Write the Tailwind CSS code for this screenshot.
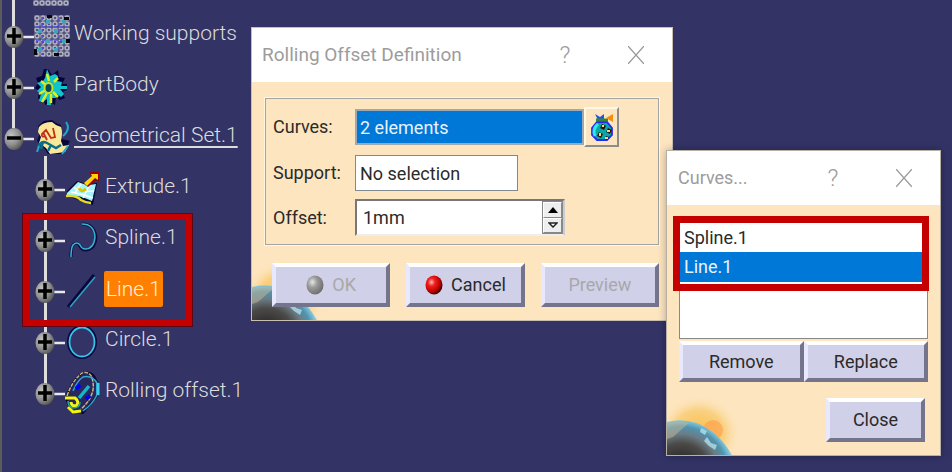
<!DOCTYPE html>
<html lang="en">
<head>
    <meta charset="UTF-8">
    <meta name="viewport" content="width=device-width, initial-scale=1.0">
    <title>Rolling Offset Definition</title>
    <script src="https://cdn.jsdelivr.net/npm/@tailwindcss/browser@4"></script>
</head>
<body class="relative min-h-screen overflow-hidden bg-[#333366] border-l-2 border-[#5c5c5c] font-['Roboto','Open_Sans',sans-serif] text-lg text-[#2a2a2a]">

    <!-- shared gradients and symbols -->
    <svg class="absolute w-0 h-0" aria-hidden="true">
        <defs>
            <radialGradient id="knob" cx="0.35" cy="0.35" r="0.7">
                <stop offset="0" stop-color="#c4c4c4"/>
                <stop offset="0.6" stop-color="#8e8e8e"/>
                <stop offset="1" stop-color="#555"/>
            </radialGradient>
            <radialGradient id="ballGray" cx="0.35" cy="0.35" r="0.7">
                <stop offset="0" stop-color="#e6e6e6"/>
                <stop offset="0.4" stop-color="#9c9c9c"/>
                <stop offset="1" stop-color="#6c6c6c"/>
            </radialGradient>
            <radialGradient id="ballRed" cx="0.35" cy="0.35" r="0.7">
                <stop offset="0" stop-color="#ffc0b0"/>
                <stop offset="0.3" stop-color="#f02020"/>
                <stop offset="0.7" stop-color="#c00000"/>
                <stop offset="1" stop-color="#300"/>
            </radialGradient>
            <radialGradient id="glow">
                <stop offset="0" stop-color="#f8bc48"/>
                <stop offset="0.6" stop-color="#f9cb70" stop-opacity="0.8"/>
                <stop offset="1" stop-color="#fde5bf" stop-opacity="0"/>
            </radialGradient>
            <radialGradient id="earth" gradientUnits="userSpaceOnUse" cx="14" cy="78" r="54">
                <stop offset="0.3" stop-color="#303030"/>
                <stop offset="0.55" stop-color="#4c4a48"/>
                <stop offset="0.72" stop-color="#6a7c84"/>
                <stop offset="0.86" stop-color="#4f94b0"/>
                <stop offset="1" stop-color="#94d4e4"/>
            </radialGradient>
            <pattern id="mesh" width="6" height="6" patternUnits="userSpaceOnUse">
                <rect width="6" height="6" fill="#55557c"/>
                <circle cx="3" cy="3" r="2" fill="none" stroke="#b4b4c4" stroke-width="1.4"/>
            </pattern>
        </defs>
        <symbol id="plus" viewBox="0 0 32 24">
            <path d="M20 13H32" stroke="#e8e8e8" stroke-width="2.5"/>
            <ellipse cx="12" cy="13" rx="9.5" ry="11" fill="url(#knob)"/>
            <path d="M5 12H19M12 4V20" stroke="#000" stroke-width="3.5"/>
        </symbol>
        <symbol id="minus" viewBox="0 0 32 24">
            <path d="M20 13H32" stroke="#e8e8e8" stroke-width="2.5"/>
            <ellipse cx="12" cy="13" rx="9.5" ry="11" fill="url(#knob)"/>
            <path d="M5 12H19" stroke="#000" stroke-width="3.5"/>
        </symbol>
        <symbol id="planet" viewBox="0 0 90 60">
            <ellipse cx="32" cy="38" rx="42" ry="38" fill="url(#glow)"/>
            <circle cx="46" cy="35" r="10" fill="#ff9c48" opacity="0.6"/>
            <path d="M0 27Q14 23 30 28Q52 37 65 60H0Z" fill="url(#earth)"/>
            <path d="M0 28Q14 25 22 28L6 42 0 44Z" fill="#c8b898" opacity="0.5"/>
            <path d="M40 42l4 6 6 2-2 5-6-4-5-5zM34 33l6 3-2 4-5-3z" fill="#c0e8f4" opacity="0.7"/>
        </symbol>
    </svg>

    <!-- specification tree -->
    <nav aria-label="Specification tree" class="w-fit text-[21px] font-light text-[#dcdcdc]">
        <ul>
            <li class="relative h-[10px] pl-[31px]">
                <div class="absolute left-[10px] top-0 w-[3px] h-[128px] bg-[#dedede]"></div>
                <svg class="w-9 h-[6px]" viewBox="0 0 36 6"><rect width="36" height="6" fill="url(#mesh)"/></svg>
            </li>
            <li class="relative flex items-center h-[51px]">
                <button aria-label="Expand"><svg class="block w-8 h-6"><use href="#plus"/></svg></button>
                <svg class="w-9 h-[42px]" viewBox="0 0 36 42">
                    <rect width="36" height="42" fill="url(#mesh)"/>
                    <path d="M2 12h32M2 25h32M8 2v38M25 2v38" stroke="#4848e8" stroke-width="1.5" stroke-dasharray="3 3"/>
                    <path d="M12 5h4v4h-4zM28 5h4v4h-4zM4 14h4v4H4zM20 14h4v4h-4zM12 24h4v4h-4zM28 24h4v4h-4zM4 33h4v4H4zM20 33h4v4h-4z" fill="#3fa4b8"/>
                    <path d="M13 0h5v3h-5zM30 2h5v3h-5zM0 34h3v6H0zM20 38h5v3h-5zM32 24h4v4h-4z" fill="#05050a"/>
                </svg>
                <span class="pl-1 pb-1">Working supports</span>
            </li>
            <li class="relative flex items-center h-[51px]">
                <button aria-label="Expand"><svg class="block w-8 h-6"><use href="#plus"/></svg></button>
                <svg class="w-9 h-[40px]" viewBox="0 0 36 40">
                    <path d="M14 2l4 6 6-5 1 7 6 1-3 6h5v6l-5 2 3 6-5 2-4-3-1 8-5-3-5 3-1-7-6 1 1-8-4-3 3-5-2-5 6-2 2-7z" fill="#04043c"/>
                    <path d="M13 2l3 7 5-2 3 2-1 5 5 1-1 4h6v3h-7l4 5-3 3-4-3-1 4h-5v7h-4v-6l-4 3-4-1 2-7-4-3 4-4-4-4 6-2 2-3z" fill="#10c4cc"/>
                    <path d="M13 7l2 7M7 14l5 4M5 27l7-4M8 35l5-9M17 36v-9M24 30l-5-5M20 15l4-4" stroke="#dcf020" stroke-width="2.5"/>
                    <ellipse cx="14.500" cy="21" rx="5" ry="6" fill="#c8e020"/>
                    <ellipse cx="14.500" cy="21" rx="3" ry="4" fill="#0a4a58"/>
                </svg>
                <span class="pl-1 pb-1">PartBody</span>
            </li>
            <li class="relative flex items-center h-[51px]">
                <button aria-label="Collapse"><svg class="block w-8 h-6"><use href="#minus"/></svg></button>
                <svg class="w-9 h-[40px]" viewBox="0 0 36 40">
                    <path d="M4 8l6-5 8-1 4 3 5 2 1 14 8 2-7 13H14l-4-6-7-7 3-8z" fill="#08083c"/>
                    <path d="M5 9q4-5 13-5l4 3 5 2q2 5 0 14l2 5 6-1-4 7-15 2-4-6-7-5 2-6-3-5z" fill="#fbe79a"/>
                    <path d="M12 18q-5 2-4-2l4-4 5 8 4-1-2-9M9 14l4 8" fill="none" stroke="#c03018" stroke-width="1.800"/>
                    <path d="M4 29q3-7 9-4l9 5 5-3M9 24l-2 7M17 27l-3 6" fill="none" stroke="#087088" stroke-width="2.500"/>
                    <path d="M32 4q5 7-3 14M5 28l-2 6M34 28l-6 8" fill="none" stroke="#20a8d0" stroke-width="2"/>
                </svg>
                <a href="#" class="ml-1 mb-1 underline underline-offset-4 decoration-2">Geometrical Set.1</a>
            </li>
        </ul>
        <ul class="relative pl-[31px]">
            <li class="relative flex items-center h-[51px]">
                <div class="absolute left-[11px] -top-[7px] w-[3px] h-[236px] bg-[#dedede]"></div>
                <button aria-label="Expand" class="relative"><svg class="block w-8 h-6"><use href="#plus"/></svg></button>
                <svg class="w-9 h-[36px]" viewBox="0 0 36 36">
                    <path d="M2 20L12 10q10 4 20 2l-4 22q-12-4-26-9z" fill="#080838"/>
                    <path d="M2 22L13 11q8 4 18 2l-4 17Q15 24 2 24z" fill="#a4f4fc"/>
                    <path d="M9 17q10 4 20 3M6 21q12 2 22 6M16 13l-6 9M24 15l-6 12" fill="none" stroke="#fff" stroke-width="1.500"/>
                    <path d="M1 25q10-1 15 4 5 3 10 3" fill="none" stroke="#e8dc20" stroke-width="2.500"/>
                    <path d="M24 1h10v10l-3-2-8 7-4-3 8-7z" fill="#900"/>
                    <path d="M26 3h7v6l-3-2-8 8-3-3 8-7z" fill="#ffd400"/>
                    <path d="M14 17q2 5 7 1" fill="none" stroke="#d8c800" stroke-width="3"/>
                </svg>
                <span class="pl-[4px] pb-1">Extrude.1</span>
            </li>
            <li class="relative flex items-center h-[51px]">
                <button aria-label="Expand"><svg class="block w-8 h-6"><use href="#plus"/></svg></button>
                <svg class="w-9 h-[36px]" viewBox="0 0 36 36" fill="none">
                    <path d="M17 2q12 0 14 13-1 13-11 13-3 0-5-4-3-5-7-1-2 3-2 12" stroke="#08083c" stroke-width="3"/>
                    <path d="M17 2q12 0 13 13-1 12-10 12-3 0-5-4-3-4-7 0-2 3-2 12" stroke="#38b4d4" stroke-width="1.500"/>
                </svg>
                <span class="pl-[4px] pb-1">Spline.1</span>
            </li>
            <li class="relative flex items-center h-[51px]">
                <button aria-label="Expand"><svg class="block w-8 h-6"><use href="#plus"/></svg></button>
                <svg class="w-9 h-[36px]" viewBox="0 0 36 36" fill="none">
                    <path d="M3 34L29 2" stroke="#08083c" stroke-width="3"/>
                    <path d="M5 34L30 4" stroke="#30a0c0" stroke-width="1.500"/>
                </svg>
                <span class="ml-[3px] mb-1 h-9 rounded-xs bg-[#ff8000] px-[2px] leading-9 text-[#fff0d8]">Line.1</span>
            </li>
            <li class="relative flex items-center h-[51px]">
                <button aria-label="Expand"><svg class="block w-8 h-6"><use href="#plus"/></svg></button>
                <svg class="w-9 h-[36px]" viewBox="0 0 36 36" fill="none">
                    <ellipse cx="17" cy="18" rx="13.500" ry="15.500" stroke="#08083c" stroke-width="3"/>
                    <ellipse cx="17" cy="18" rx="12.500" ry="14.500" stroke="#38c4f0" stroke-width="1.800"/>
                </svg>
                <span class="pl-[4px] pb-1">Circle.1</span>
            </li>
            <li class="relative flex items-center h-[51px]">
                <button aria-label="Expand"><svg class="block w-8 h-6"><use href="#plus"/></svg></button>
                <svg class="w-9 h-[44px]" viewBox="0 0 36 44" fill="none">
                    <path d="M1 27Q5 12 17 2q8-2 12 3l4 8-1 12-14 17-12-2z" fill="#28285c" stroke="#080830" stroke-width="2"/>
                    <path d="M2 25Q7 10 17 2q8-2 10 5 3 10-1 18-3 7-10 13" stroke="#c8b480" stroke-width="1.500" stroke-dasharray="4 1"/>
                    <path d="M8 20Q12 10 18 6q9-2 14 6v12q-5 10-14 16" stroke="#30a8d0" stroke-width="1.500"/>
                    <path d="M33 12v12" stroke="#38d0f0" stroke-width="3"/>
                    <path d="M14 27L24 15" stroke="#10b8c8" stroke-width="3.500"/>
                    <path d="M11 18l4-4M21 28l4-3" stroke="#0000f0" stroke-width="4"/>
                    <path d="M0 27h10q5 4 1 8-5 0-5-4M3 36l5 5 8-1" stroke="#f4f410" stroke-width="3"/>
                    <path d="M3 30q0 6 5 7 7 0 7-6" stroke="#20b0a0" stroke-width="1.500"/>
                </svg>
                <span class="pl-[4px] pb-1">Rolling offset.1</span>
            </li>
            <!-- highlight around the selected curves -->
            <li aria-hidden="true" class="absolute left-[20px] top-[50px] w-[171px] h-[114px] border-7 border-[#c40000] outline-1 -outline-offset-1 outline-[#5a0818]"></li>
        </ul>
    </nav>

    <!-- Rolling Offset Definition -->
    <section aria-label="Rolling Offset Definition" class="absolute left-[249px] top-[27px] w-[422px] overflow-hidden border border-[#c8bfb0] bg-[#fde5bf]">
        <svg class="absolute left-0 bottom-0 w-[90px] h-[60px]" aria-hidden="true"><use href="#planet"/></svg>
        <header class="flex items-center h-[54px] bg-white pl-[10px] pr-7 text-[#9c9c9c]">
            <h1 class="grow text-[19px]">Rolling Offset Definition</h1>
            <button aria-label="Help" class="w-6 text-2xl font-light">?</button>
            <button aria-label="Close window" class="ml-[51px]"><svg class="block w-4 h-[18px]" viewBox="0 0 16 18" stroke="#999" stroke-width="1.300"><path d="M0 0L16 18M16 0L0 18"/></svg></button>
        </header>
        <div class="relative px-[13px] pt-4 pb-[13px]">
            <form class="grid grid-cols-[82px_1fr] items-center gap-y-2 border border-[#a4a4a4] outline-1 outline-[#fff6e4] pl-[7px] pt-2 pb-2">
                <label for="curves">Curves:</label>
                <div class="flex items-center">
                    <input id="curves" type="text" value="2 elements" readonly class="w-[229px] h-9 border-2 border-[#a0a8b0] bg-[#0078d7] px-[3px] text-[#e8f2fc] outline-none">
                    <button type="button" aria-label="Edit curves list" class="flex items-center justify-center w-[35px] h-[40px] border-2 border-t-[#fff8e8] border-l-[#fff8e8] border-r-[#8c8c8c] border-b-[#8c8c8c]">
                        <svg class="w-6 h-[28px]" viewBox="0 0 24 28">
                            <path d="M7 9h10l5 6v7l-5 5H7l-5-5v-7z" fill="#08a8a8" stroke="#2828f0" stroke-width="1.800"/>
                            <path d="M8 11q-6 5-3 12" fill="none" stroke="#30e8f0" stroke-width="3"/>
                            <path d="M5 1l5 3 4-3v6H8z" fill="#2850f0"/>
                            <path d="M6 7h12" stroke="#308830" stroke-width="3"/>
                            <path d="M16 5l7-4v8z" fill="#f09010"/>
                            <path d="M12 11l4 2-2 4-4-2zM18 15l4 2-2 4-4-2zM9 19l4 2-2 4-4-2zM16 23l3 1-2 3-2-2z" fill="#301008"/>
                            <path d="M12 12h2v2h-2zM17 17h3v2h-3zM9 20h2v3H9zM15 24h3v2h-3z" fill="#f8d888"/>
                        </svg>
                    </button>
                </div>
                <label for="support">Support:</label>
                <input id="support" type="text" value="No selection" readonly class="w-[163px] h-9 border border-[#808890] bg-white px-1 outline-none">
                <label for="offset">Offset:</label>
                <div class="flex w-[210px] h-[37px] border-2 border-t-[#777] border-l-[#777] border-r-[#ccc] border-b-[#eee] bg-white">
                    <input id="offset" type="text" value="1mm" class="min-w-0 grow px-[6px] outline-none">
                    <div class="flex flex-col w-[27px] border border-[#888]">
                        <button type="button" aria-label="Increase offset" class="flex grow items-center justify-center border border-white border-b-[#888] border-r-[#888] bg-[#eee]"><svg class="w-[10px] h-[6px]" viewBox="0 0 10 6"><path d="M5 0l5 6H0z"/></svg></button>
                        <button type="button" aria-label="Decrease offset" class="flex grow items-center justify-center border border-white border-b-[#888] border-r-[#888] bg-[#eee]"><svg class="w-[10px] h-[6px]" viewBox="0 0 10 6"><path d="M1 1h8L5 5z" fill="#fff" stroke="#222" stroke-width="1.500"/></svg></button>
                    </div>
                </div>
            </form>
            <div class="flex gap-4 pt-[18px] pl-[7px]">
                <button disabled class="flex grow basis-0 h-[44px] items-center justify-center gap-2 border-4 border-t-white border-l-[#e8e8ff] border-r-[#74748c] border-b-[#74748c] bg-[#d0d0e8] text-[#a8a8a8]">
                    <svg class="w-[18px] h-5" viewBox="0 0 18 20"><ellipse cx="9" cy="10" rx="8.500" ry="9.500" fill="url(#ballGray)"/></svg>
                    OK
                </button>
                <button class="flex grow basis-0 h-[44px] items-center justify-center gap-2 border-4 border-t-white border-l-[#e8e8ff] border-r-[#74748c] border-b-[#74748c] bg-[#d0d0e8]">
                    <svg class="w-[18px] h-5" viewBox="0 0 18 20"><ellipse cx="9" cy="10" rx="8.500" ry="9.500" fill="url(#ballRed)"/></svg>
                    Cancel
                </button>
                <button disabled class="grow basis-0 h-[44px] border-4 border-t-white border-l-[#e8e8ff] border-r-[#74748c] border-b-[#74748c] bg-[#d0d0e8] text-[#a8a8a8]">Preview</button>
            </div>
        </div>
    </section>

    <!-- Curves list -->
    <section aria-label="Curves" class="absolute left-[664px] top-[150px] w-[275px] border border-[#b8b0a4] bg-[#fde5bf] shadow-[0_0_8px_rgba(0,0,0,0.3)]">
        <svg class="absolute left-0 bottom-0 w-[90px] h-[60px]" aria-hidden="true"><use href="#planet"/></svg>
        <header class="flex items-center h-[54px] bg-white pl-[11px] pr-7 text-[#9c9c9c]">
            <h2 class="grow">Curves...</h2>
            <button aria-label="Help" class="w-6 text-2xl font-light">?</button>
            <button aria-label="Close window" class="ml-[51px]"><svg class="block w-4 h-[18px]" viewBox="0 0 16 18" stroke="#999" stroke-width="1.300"><path d="M0 0L16 18M16 0L0 18"/></svg></button>
        </header>
        <div class="relative px-3 pt-[17px] pb-[13px]">
            <select size="4" aria-label="Selected curves" class="block w-full h-[117px] overflow-hidden border border-[#888] bg-white outline-none">
                <option class="h-[29px] px-[4px] pt-1">Spline.1</option>
                <option class="h-[30px] bg-[#0078d7] px-[4px] pt-1 text-[#e8f2fc]">Line.1</option>
            </select>
            <div class="absolute left-[6px] right-[11px] top-[11px] h-[75px] border-7 border-[#c40000] pointer-events-none"></div>
            <div class="flex pt-[2px]">
                <button class="grow basis-0 h-[41px] border-4 border-t-white border-l-[#e8e8ff] border-r-[#74748c] border-b-[#74748c] bg-[#d0d0e8]">Remove</button>
                <button class="grow basis-0 h-[41px] border-4 border-t-white border-l-[#e8e8ff] border-r-[#74748c] border-b-[#74748c] bg-[#d0d0e8]">Replace</button>
            </div>
            <div class="flex justify-end pt-4 pr-[3px]">
                <button class="w-[99px] h-[44px] border-4 border-t-white border-l-[#e8e8ff] border-r-[#74748c] border-b-[#74748c] bg-[#d0d0e8]">Close</button>
            </div>
        </div>
    </section>

</body>
</html>
